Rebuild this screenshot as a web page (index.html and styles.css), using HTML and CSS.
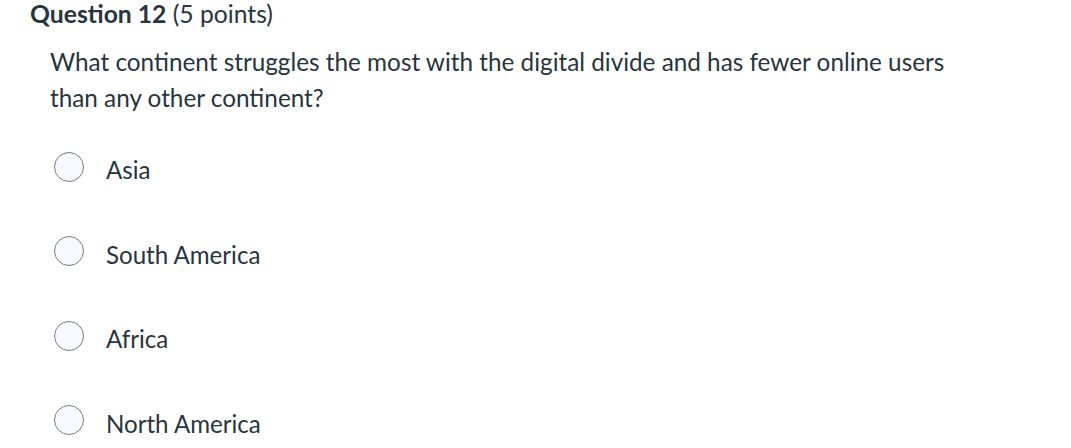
FILE: index.html
```html
<!DOCTYPE html>
<html>
<head>
<meta charset="utf-8">
<link rel="stylesheet" href="styles.css">
</head>
<body>
<div class="question">
  <h2 class="q-header"><span class="q-name">Question 12</span> <span class="q-points">(5 points)</span></h2>
  <div class="q-body">
    <p class="q-text">What continent struggles the most with the digital divide and has fewer online users than any other continent?</p>
    <div class="answers">
      <label class="answer"><span class="radio"></span><span class="a-text">Asia</span></label>
      <label class="answer"><span class="radio"></span><span class="a-text">South America</span></label>
      <label class="answer"><span class="radio"></span><span class="a-text">Africa</span></label>
      <label class="answer"><span class="radio"></span><span class="a-text">North America</span></label>
    </div>
  </div>
</div>
</body>
</html>
```

FILE: styles.css
```css
html, body {
  margin: 0;
  padding: 0;
  background: #ffffff;
}
body {
  font-family: Lato, "Liberation Sans", sans-serif;
  color: #273540;
}
.question {
  padding: 0 0 0 30px;
}
.q-header {
  margin: 0;
  font-size: 24.7px;
  line-height: 28px;
  font-weight: normal;
  color: #273540;
}
.q-name {
  font-weight: bold;
}
.q-body {
  padding-left: 20px;
}
.q-text {
  margin: 16px 0 0 0;
  font-size: 24.3px;
  line-height: 36px;
  width: 920px;
}
.answers {
  display: flex;
  flex-direction: column;
  margin-top: 38px;
  gap: 53.5px;
}
.answer {
  display: flex;
  align-items: center;
  height: 31px;
}
.radio {
  flex: none;
  width: 28px;
  height: 28px;
  border: 1.3px solid #7b7b7b;
  border-radius: 50%;
  background: #f7f9ff;
  margin: 0 22px 6px 4px;
}
.a-text {
  font-size: 24.1px;
}
```
